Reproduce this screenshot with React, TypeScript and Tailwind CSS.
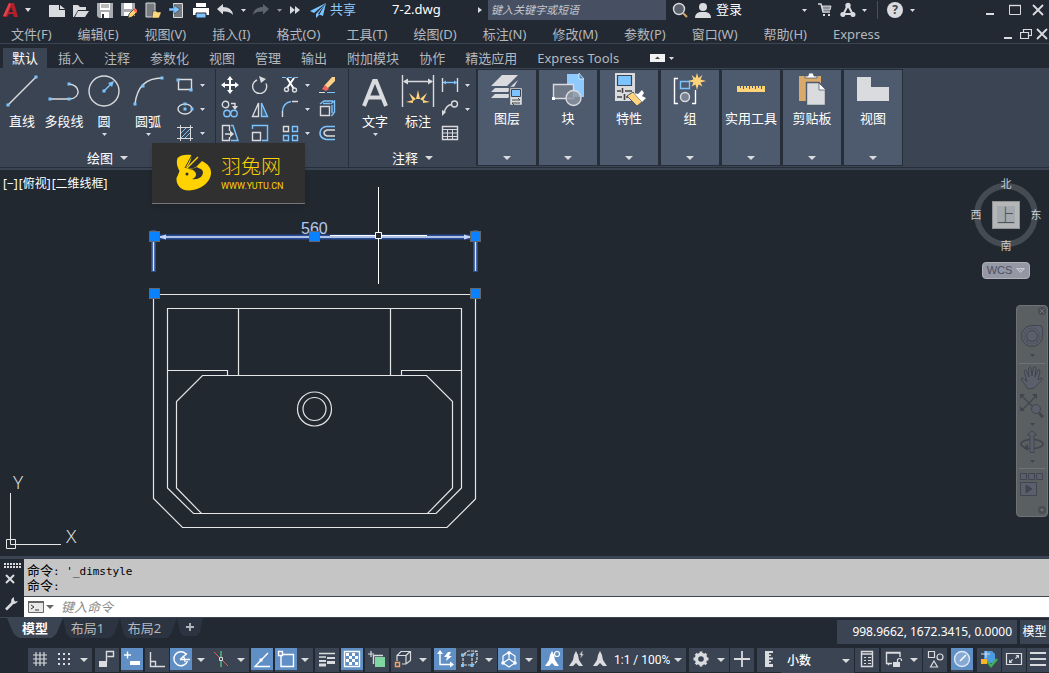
import React from "react";

type Kids = { children?: React.ReactNode };

const L = "#d9dbde";
const B = "#7cc4ff";

function Svg({ w = 24, h = 24, children, className = "" }: Kids & { w?: number; h?: number; className?: string }) {
  return (
    <svg width={w} height={h} viewBox={`0 0 ${w} ${h}`} fill="none" stroke={L} strokeWidth={1.4} className={`shrink-0 ${className}`} aria-hidden="true">
      {children}
    </svg>
  );
}

function Caret({ big = false }: { big?: boolean }) {
  return big ? (
    <svg width="8" height="4" viewBox="0 0 8 4" className="shrink-0" aria-hidden="true"><path d="M0 0h8L4 4z" fill={L} /></svg>
  ) : (
    <svg width="5" height="3" viewBox="0 0 5 3" className="shrink-0" aria-hidden="true"><path d="M0 0h5L2.500 3z" fill={L} /></svg>
  );
}

function IconButton({ label, w, children }: Kids & { label: string; w: string }) {
  return (
    <button type="button" aria-label={label} className={`flex shrink-0 items-center justify-center ${w}`}>
      {children}
    </button>
  );
}

/* ---------- Title bar ---------- */

function TitleBar() {
  return (
    <header className="flex h-5 shrink-0 items-center text-[13px] text-white">
      <IconButton label="应用程序菜单" w="w-[22px]">
        <Svg w={16} h={18}>
          <path d="M6 2h5l4 14h-4l-1-3H6l-2 3H0z" fill="#b3202c" stroke="none" />
          <path d="M6 2l2 1-5 12H0z" fill="#e0444c" stroke="none" />
          <path d="M8 6l2 5H6z" fill="#222933" stroke="none" />
        </Svg>
      </IconButton>
      <IconButton label="展开" w="w-[12px]"><Svg w={6} h={4}><path d="M0 0h6L3 4z" fill={L} stroke="none" /></Svg></IconButton>
      <div className="flex pl-[11px]">
        <IconButton label="新建" w="w-6">
          <Svg w={16} h={18}><path d="M0 4h10v5h6v7H0z" fill={L} stroke="none" /><path d="M11 4l5 4h-5z" fill={L} stroke="none" /></Svg>
        </IconButton>
        <IconButton label="打开" w="w-6">
          <Svg w={18} h={18}><path d="M1 16V4h5l2 2h6v3H6L2 16z" fill={L} stroke="none" /><path d="M6 10h11l-4 6H3z" fill={L} stroke="none" /></Svg>
        </IconButton>
        <IconButton label="保存" w="w-6">
          <Svg w={16} h={18}><path d="M0 2h16v15H2l-2-2z" fill="#a9adb3" stroke="none" /><path d="M3 2h10v7H3zM4 11h8v6H4z" fill="#fff" stroke="none" /><path d="M4 4h8M4 6h8" stroke="#777" strokeWidth={1} /><path d="M5 13h2v4H5z" fill="#333" stroke="none" /></Svg>
        </IconButton>
        <IconButton label="另存为" w="w-6">
          <Svg w={16} h={18}><path d="M0 2h14v13H0z" fill="#a9adb3" stroke="none" /><path d="M3 2h8v6H3zM3 11h7v4H3z" fill="#fff" stroke="none" /><path d="M8 13l5-5 3 3-5 5-4 1z" fill="#ffcf70" stroke="#222933" strokeWidth={0.7} /><path d="M12 9l2-2 3 3-2 2z" fill="#f4715c" stroke="none" /></Svg>
        </IconButton>
        <IconButton label="从移动设备打开" w="w-6">
          <Svg w={16} h={18}><path d="M1 2h9v14H1z" fill="#777b80" stroke={L} strokeWidth={1} /><path d="M8 10h3l1 1h4v1l-2 5H7z" fill="#ffd77d" stroke="#222933" strokeWidth={0.5} /></Svg>
        </IconButton>
        <IconButton label="保存到移动设备" w="w-6">
          <Svg w={16} h={18}><path d="M4.500 2.500h9v14h-9z" fill="#777b80" stroke={L} strokeWidth={1} /><path d="M0 7h5V4l6 4.500L5 13v-3H0z" fill={B} stroke="#222933" strokeWidth={0.5} /></Svg>
        </IconButton>
        <IconButton label="打印" w="w-6">
          <Svg w={16} h={18}><path d="M3 2h10v4H3zM0 7h16v7H0z" fill="#fff" stroke="none" /><path d="M3 12h10v5H3z" fill={B} stroke="#222933" strokeWidth={1} /></Svg>
        </IconButton>
        <IconButton label="放弃" w="w-6">
          <Svg w={16} h={12}><path d="M0 5l6-5v3q9 0 10 8-3-4-10-3.500v3z" fill={L} stroke="none" /></Svg>
        </IconButton>
        <IconButton label="放弃列表" w="w-3"><Caret /></IconButton>
        <IconButton label="重做" w="w-6">
          <Svg w={16} h={12}><path d="M16 5l-6-5v3Q1 3 0 11q3-4 10-3.500v3z" fill="#5d646d" stroke="none" /></Svg>
        </IconButton>
        <IconButton label="重做列表" w="w-3"><span className="opacity-60"><Caret /></span></IconButton>
        <IconButton label="更多" w="w-5">
          <Svg w={10} h={8}><path d="M0 0l5 4-5 4zM5 0l5 4-5 4z" fill={L} stroke="none" /></Svg>
        </IconButton>
      </div>
      <button type="button" className="ml-[5px] flex shrink-0 items-center gap-1 text-[#8fcaff]">
        <Svg w={16} h={16}><path d="M16 1L0 9l4 2zM16 1L6 12v4l3-3zM16 1l-3 13-5-2z" fill={B} stroke="none" /></Svg>
        共享
      </button>
      <h1 className="ml-9 w-[84px] shrink-0 text-[13px] font-normal">7-2.dwg</h1>
      <IconButton label="收拢" w="w-2"><Svg w={4} h={6}><path d="M0 0l4 3-4 3z" fill={L} stroke="none" /></Svg></IconButton>
      <input aria-label="搜索" placeholder="键入关键字或短语" className="ml-1 h-5 w-[178px] min-w-0 bg-[#475063] px-[3px] pb-0.5 text-[11px] italic outline-none placeholder:text-[#c3c7ce]" />
      <IconButton label="查找" w="w-[27px]">
        <Svg w={16} h={16}><circle cx="7" cy="7" r="5.500" fill="#59616c" /><path d="M11 11l4 4" stroke="#d8a768" strokeWidth={2} /></Svg>
      </IconButton>
      <button type="button" className="flex shrink-0 items-center gap-1 pl-px">
        <Svg w={18} h={16}><circle cx="9" cy="5" r="4" fill={L} stroke="none" /><path d="M1 16q0-5 5-6h6q5 1 5 6z" fill={L} stroke="none" /></Svg>
        登录
      </button>
      <div className="ml-auto flex shrink-0 items-center">
        <IconButton label="登录菜单" w="w-3"><Caret /></IconButton>
        <IconButton label="应用商店" w="w-[30px]">
          <Svg w={14} h={14}><path d="M0 1h3l2 8h7" /><path d="M4 3h9l-1 4H5z" fill="#8d929a" strokeWidth={1} /><path d="M5 11h2v2H5zM10 11h2v2h-2z" fill={L} stroke="none" /></Svg>
        </IconButton>
        <IconButton label="保持联系" w="w-4">
          <Svg w={16} h={16}><path d="M8 3L3 13M8 3l5 10M3 12h10" strokeWidth={2} /><circle cx="8" cy="3.500" r="2" fill={L} /><circle cx="2.800" cy="12.500" r="1.800" fill={L} /><circle cx="13" cy="12.500" r="1.800" fill={L} /></Svg>
        </IconButton>
        <IconButton label="联系菜单" w="w-4"><Caret /></IconButton>
        <div className="mx-[5px] h-[18px] w-px bg-[#475063]" />
        <button type="button" aria-label="帮助" className="ml-1 flex size-4 shrink-0 items-center justify-center rounded-full bg-[#d9dbde] text-[12px] font-bold text-[#3b4453]">?</button>
        <IconButton label="帮助菜单" w="w-[18px]"><Caret /></IconButton>
      </div>
      <div className="ml-14 flex shrink-0 items-center">
        <IconButton label="最小化" w="w-[26px]"><Svg w={12} h={12}><path d="M2 10h8" strokeWidth={2} /></Svg></IconButton>
        <IconButton label="最大化" w="w-6"><Svg w={12} h={12}><path d="M.5 1.500h11v9H.5z" strokeWidth={1} /><path d="M0 1.500h12" /></Svg></IconButton>
        <IconButton label="关闭" w="w-[22px]"><Svg w={12} h={12}><path d="M1 1l10 10M11 1L1 11" strokeWidth={1.800} /></Svg></IconButton>
      </div>
    </header>
  );
}

/* ---------- Menu bar and ribbon tabs ---------- */

const MENUS = ["文件(F)", "编辑(E)", "视图(V)", "插入(I)", "格式(O)", "工具(T)", "绘图(D)", "标注(N)", "修改(M)", "参数(P)", "窗口(W)", "帮助(H)", "Express"];

function MenuBar() {
  return (
    <nav className="flex h-6 shrink-0 items-center border-b border-[#3b4453] pt-1 pl-[11px] text-[13px] leading-5 text-[#b4b8be]">
      <div className="flex gap-[26px]">
        {MENUS.map((m) => (
          <button type="button" key={m} className="whitespace-nowrap">{m}</button>
        ))}
      </div>
      <div className="ml-auto flex text-white">
        <IconButton label="最小化图形" w="w-[18px]"><Svg w={10} h={12}><path d="M1 10h8" strokeWidth={2} /></Svg></IconButton>
        <IconButton label="还原图形" w="w-[18px]"><Svg w={12} h={12}><path d="M3.500 4V1.500h8v6H9M.5 4.500h8v6h-8z" strokeWidth={1.200} /></Svg></IconButton>
        <IconButton label="关闭图形" w="w-[14px]"><Svg w={12} h={12}><path d="M1 1l10 10M11 1L1 11" strokeWidth={1.800} /></Svg></IconButton>
      </div>
    </nav>
  );
}

const TABS = ["默认", "插入", "注释", "参数化", "视图", "管理", "输出", "附加模块", "协作", "精选应用", "Express Tools"];

function RibbonTabs() {
  return (
    <nav className="flex h-[25px] shrink-0 items-end gap-0.5 border-b border-[#3b4453] pl-[3px] text-[13px]">
      {TABS.map((t, i) => (
        <button type="button" key={t} className={`h-5 px-[9px] leading-5 whitespace-nowrap ${i === 0 ? "bg-[#3b4453] text-white" : "text-[#b4b8be]"}`}>{t}</button>
      ))}
      <button type="button" aria-label="最小化功能区" className="ml-5 flex h-5 items-center gap-1">
        <svg width="15" height="8" viewBox="0 0 15 8" aria-hidden="true"><path d="M0 0h15v8H0z" fill="#f2f2f2" /><path d="M5 5h5L7.500 2.500z" fill="#444" /></svg>
        <Caret />
      </button>
    </nav>
  );
}

/* ---------- Ribbon ---------- */

function Big({ label, w, caret = false, children }: Kids & { label: string; w: string; caret?: boolean }) {
  return (
    <button type="button" className={`flex shrink-0 flex-col items-center ${w}`}>
      <span className="flex h-9 items-center justify-center">{children}</span>
      <span className="mt-0.5 h-5 leading-5 whitespace-nowrap">{label}</span>
      <span className="mt-0.5 flex h-1">{caret && <Caret />}</span>
    </button>
  );
}

function Small({ label, caret = false, children }: Kids & { label: string; caret?: boolean }) {
  return (
    <div className="flex h-6 items-center">
      <IconButton label={label} w="w-[26px]"><Svg w={18} h={18}>{children}</Svg></IconButton>
      <span className="flex w-2 justify-center">{caret && <Caret />}</span>
    </div>
  );
}

function PanelTitle({ children }: Kids) {
  return (
    <button type="button" className="mx-auto mt-auto flex h-[18px] items-center gap-[7px] leading-[18px]">
      {children}
      <Caret big />
    </button>
  );
}

const dot = (x: number, y: number) => <rect x={x - 1.5} y={y - 1.5} width="3" height="3" fill={B} stroke="none" />;

function DrawPanel() {
  return (
    <section className="flex w-[216px] shrink-0 flex-col border-r border-[#262e3a] pt-1">
      <div className="flex">
        <Big label="直线" w="w-[44px]"><Svg w={34} h={34}><path d="M3 31L31 3" />{dot(3, 31)}{dot(31, 3)}</Svg></Big>
        <Big label="多段线" w="w-[40px]"><Svg w={34} h={34}><path d="M2 25h21M22 10c12 1 12 14 1 15" />{dot(3, 25)}{dot(22, 10)}{dot(22, 25)}</Svg></Big>
        <Big label="圆" w="w-[40px]" caret><Svg w={34} h={34}><circle cx="17" cy="17" r="15" /><path d="M17 17l8-8" stroke={B} /><path d="M27 7l-6 2 4 4z" fill={B} stroke="none" />{dot(17, 17)}</Svg></Big>
        <Big label="圆弧" w="w-[48px]" caret><Svg w={34} h={34}><path d="M4 30Q7 4 31 4" />{dot(4, 30)}{dot(12, 12)}{dot(31, 4)}</Svg></Big>
        <div>
          <Small label="矩形" caret><path d="M2.500 3.500h13v10h-13z" />{dot(2, 4)}{dot(15, 14)}</Small>
          <Small label="椭圆" caret><ellipse cx="9" cy="9" rx="7" ry="5" />{dot(9, 4)}{dot(9, 9)}{dot(16, 9)}</Small>
          <Small label="图案填充" caret><path d="M4.500 1v16M14.500 1v16M1 3.500h16M1 14.500h16" strokeWidth={1} /><path d="M5 9l5-5M5 14L14 5M9 14l5-5" stroke={B} strokeWidth={1} /></Small>
        </div>
      </div>
      <PanelTitle>绘图</PanelTitle>
    </section>
  );
}

function ModifyPanel() {
  return (
    <section className="flex w-[133px] shrink-0 border-r border-[#262e3a] pt-1 pl-px">
      <div className="w-[30px]">
        <Small label="移动"><path d="M9 2v14M2 9h14" stroke="#fff" strokeWidth={2} /><path d="M9 0l3 4H6zM9 18l3-4H6zM0 9l4-3v6zM18 9l-4-3v6z" fill="#fff" stroke="none" /></Small>
        <Small label="复制"><circle cx="4.500" cy="4.500" r="3.200" /><path d="M10 3.500h4v3" /><path d="M11 6h6l-3 4z" fill={L} stroke="none" /><circle cx="6" cy="13.500" r="3.200" stroke={B} /><circle cx="13" cy="13.500" r="3.200" stroke={B} /></Small>
        <Small label="拉伸"><path d="M8.500 7V1.500h-7v15h7V13M4 10h6" /><path d="M9 6.500l4 3.500-4 3.500z" fill={L} stroke="none" /><path d="M10 1.500h2l5 15h-7" stroke={B} /></Small>
      </div>
      <div className="w-[30px]">
        <Small label="旋转"><path d="M6 4A7 7 0 1 0 15 7.500" /><path d="M8 0l7 3-5 4z" fill={L} stroke="none" /></Small>
        <Small label="镜像"><path d="M7.500 3v13.500h-6z" /><path d="M10.500 3v13.500h6z" stroke={B} fill="#45637f" /></Small>
        <Small label="缩放"><path d="M1.500 5V1.500h15v15H11" stroke={B} /><path d="M1.500 8.500h8v8h-8z" /></Small>
      </div>
      <div className="w-[40px]">
        <Small label="修剪" caret><path d="M1 1.500h16" stroke={B} strokeWidth={1} strokeDasharray="4 2" /><path d="M6 2l7 11M13 2L6 12" stroke="#fff" strokeWidth={2} /><circle cx="5.500" cy="13.500" r="2" /><circle cx="13.500" cy="14" r="2" /></Small>
        <Small label="圆角" caret><path d="M1.500 11Q2 3 10 1.500" stroke={B} /><path d="M11 1.500h6M1.500 11v6" /></Small>
        <Small label="阵列" caret><path d="M2.500 2.500h5v5h-5z" /><path d="M11.500 2.500h5v5h-5zM2.500 11.500h5v5h-5zM11.500 11.500h5v5h-5z" stroke={B} /></Small>
      </div>
      <div>
        <Small label="删除"><path d="M6 10l8-9h3v4l-8 8z" fill="#ffd08a" stroke="none" /><path d="M4 13l3-4 4 4-3 2z" fill="#f2655c" stroke="none" /><path d="M1 16.500h6" strokeWidth={1} /><path d="M9 16.500h8" stroke={B} strokeWidth={1} /></Small>
        <Small label="分解"><path d="M2.500 6.500h9v9h-9z" /><path d="M2 4l4-3h9M5 3.500h7M12.500 4l4-3v11l-3 4M14 5v8" stroke={B} /></Small>
        <Small label="偏移"><path d="M17 2.500H8Q2 4 2 9t6 6.500h9" stroke={B} strokeWidth={1.600} /><path d="M17 6H9Q6 7 6 9t3 3h8" /></Small>
      </div>
    </section>
  );
}

function AnnotatePanel() {
  return (
    <section className="flex w-[127px] shrink-0 flex-col pt-1">
      <div className="flex">
        <Big label="文字" w="w-[52px]" caret><Svg w={32} h={36}><path d="M5 33L15 8h2l10 25M9 24.500h14" strokeWidth={4} /></Svg></Big>
        <Big label="标注" w="w-[34px]">
          <Svg w={34} h={36}><path d="M1.500 2v32M32.500 2v32M3 8.500h28" /><path d="M2 8.500l5-3v6zM32 8.500l-5-3v6z" fill={L} stroke="none" /><path d="M17 17l-2 9h4zM8 20l7 6-3 2zM26 20l-7 6 3 2zM5 29l7-2v3zM29 29l-7-2v3z" fill="#ffd37a" stroke="none" /></Svg>
        </Big>
        <div className="pl-0.5">
          <Small label="线性标注" caret><path d="M1.500 2v14M16.500 2v14" /><path d="M2 6.500h14" stroke={B} /><path d="M2 6.500l3-2v4zM16 6.500l-3-2v4z" fill={B} stroke="none" /></Small>
          <Small label="引线" caret><circle cx="13.500" cy="4" r="3" /><path d="M10.500 4.500Q5 5 3 13" /><path d="M1 16V10l4 2z" fill={L} stroke="none" /></Small>
          <Small label="表格"><path d="M1.500 2.500h15v13h-15z" /><path d="M1.500 5.500h15M1.500 9h15M1.500 12.500h15M6.500 6v10M11.500 6v10" strokeWidth={1} /></Small>
        </div>
      </div>
      <PanelTitle>注释</PanelTitle>
    </section>
  );
}

const TILES: { label: string; icon: React.ReactNode }[] = [
  {
    label: "图层",
    icon: <Svg w={36} h={36}><path d="M2 14L13 3h16L18 14zM2 20l4-4h14l9-8-4 7-6 5zM2 26l4-4h14l9-7-4 7-6 4z" fill={L} stroke="none" /><path d="M20.500 15.500h13v18h-13z" fill={L} stroke="#4e5a6e" /><path d="M22.500 17.500h9v7h-9z" fill={B} stroke="#3b4453" strokeWidth={1} /><path d="M23 28h8l-2-2M31 31h-8l2 2" stroke="#444" strokeWidth={1} /></Svg>,
  },
  {
    label: "块",
    icon: <Svg w={36} h={36}><path d="M17 2h12l5 5v18H17z" fill="#8fcaff" stroke="none" /><path d="M29 1l5 6h-5z" fill="#4e8fc2" stroke="#fff" strokeWidth={0.600} /><path d="M3.500 12.500h20v14h-20z" fill="#6f7988" /><circle cx="23.500" cy="26" r="7.500" fill="#8d96a3" fillOpacity={0.800} /><path d="M2 25h3v3H2z" fill="#fff" stroke="none" /></Svg>,
  },
  {
    label: "特性",
    icon: <Svg w={36} h={36}><path d="M4 1h20v28H4z" fill={L} stroke="none" /><path d="M6.500 3.500h14v10h-14z" fill={B} stroke="#3b4453" strokeWidth={1.200} /><path d="M6 19h4M14 19h7M6 25h5M15 25h5" stroke="#444" /><path d="M11.500 16v5M13.500 22v6" stroke="#444" strokeWidth={1.600} /><path d="M16 24l6-4 9 10-5 4z" fill="#ffd37a" stroke="#4e5a6e" strokeWidth={1} /><path d="M23 21l4 1 4-4 2 3-2 3 4 2-4 4z" fill="#fff" stroke="none" /></Svg>,
  },
  {
    label: "组",
    icon: <Svg w={36} h={36}><path d="M6 6.500H2.500v25H6M20 31.500h3.500V18" stroke="#fff" /><path d="M8.500 9.500h9v7h-9z" stroke={B} /><circle cx="13" cy="25" r="4.500" fill="#7a8391" /><path d="M25 1l1.500 5 4-3-2 4.500L34 9l-5.500 1.500 2 4-4-2L25 18l-1.500-5.500-4 2 2-4L16 9l5.500-1.500-2-4.500 4 3z" fill="#ffd37a" stroke="none" /></Svg>,
  },
  {
    label: "实用工具",
    icon: <Svg w={36} h={36}><path d="M4 14h28v6H4z" fill="#ffd37a" stroke="none" /><path d="M7.500 14v2M10.500 14v3M13.500 14v2M16.500 14v3M19.500 14v2M22.500 14v3M25.500 14v2M28.500 14v3" stroke="#4e5a6e" strokeWidth={1} /></Svg>,
  },
  {
    label: "剪贴板",
    icon: <Svg w={36} h={36}><path d="M5 4h22v25H5z" fill="#d9aa6c" stroke="none" /><path d="M11 6V4h3l1-3h4l1 3h3v2z" fill="#fff" stroke="#4e5a6e" strokeWidth={0.800} /><path d="M12.500 10.500H25l6.500 7v16h-19z" fill={L} stroke="#4e5a6e" /><path d="M25 11v7h7z" fill="#fff" stroke="#4e5a6e" strokeWidth={0.800} /></Svg>,
  },
  { label: "视图", icon: <Svg w={36} h={36}><path d="M2 5h14v10h18v14H2z" fill={L} stroke="none" /></Svg> },
];

function Ribbon() {
  return (
    <div className="relative shrink-0 border-b-2 border-[#3b4453] text-[13px] text-white">
      <div className="flex h-[99px] border-b border-[#262e3a] bg-[#3b4453]">
        <DrawPanel />
        <ModifyPanel />
        <AnnotatePanel />
        <div className="mb-px flex shrink-0 gap-[3px] bg-[#262e3a] pt-px pr-px pb-px pl-0.5">
          {TILES.map((t) => (
            <button type="button" key={t.label} className="flex w-[58px] flex-col items-center bg-[#4e5a6e] pt-0.5">
              {t.icon}
              <span className="h-5 leading-5 whitespace-nowrap">{t.label}</span>
              <span className="mt-auto flex pb-[5px]"><Caret big /></span>
            </button>
          ))}
        </div>
      </div>
      <div className="absolute top-[74px] left-[152px] z-10 flex h-[61px] w-[153px] items-center gap-[9px] border-b border-[#777] bg-[#303030] pl-6 text-[#ffd200] shadow-md">
        <svg width="36" height="38" viewBox="0 0 36 38" aria-hidden="true">
          <path d="M1.500 4C4 1 10 0 15.500 1c0 5-2 9-5.500 13 3 0 7 1 10-1l6-6c6 3 9.500 7 9 13-1 9-11 16-22 16.500C4 36.500 0 30 .5 24c1-2 2-4 3-7C1 13 0 8 1.500 4z" fill="#ffd200" />
          <path d="M10 15c4-1 8 0 11-2 2 2 5 1 6 5 0 5-5 8-11 7 4-1 5-5 3-7-2-3-5-3-9-3z" fill="#303030" />
          <path d="M22 3L11 14" stroke="#ffd200" strokeWidth="1.500" />
          <path d="M16 1L9 14" stroke="#303030" strokeWidth="1" />
          <circle cx="11" cy="20" r="1.500" fill="#303030" />
        </svg>
        <div className="flex flex-col">
          <span className="text-[20px] leading-[26px] font-light">羽兔网</span>
          <span className="font-['Roboto',sans-serif] text-[9px] leading-3">WWW.YUTU.CN</span>
        </div>
      </div>
    </div>
  );
}

/* ---------- Drawing area ---------- */

function Grip({ x, y }: { x: number; y: number }) {
  return <rect x={x - 5} y={y - 5} width="10" height="10" fill="#0a82ff" stroke="#62676e" strokeWidth="1" />;
}

function Sink() {
  return (
    <svg className="absolute inset-0 h-full w-full" fill="none" aria-label="洗脸盆平面图" role="img">
      <g stroke="#e4e6e8" strokeWidth="1.2">
        <path d="M153.500 124.500H475.500V329l-28.500 28.500H182.500L153.500 328.500z" />
        <path d="M167.500 138.500H461.500V318L436 343.500H193.500L167.500 318z" />
        <path d="M202.500 205.500h224l26 26V318L427.500 343.500h-226L176.500 318V231.500z" />
        <path d="M238.500 138.500v67M390.500 138.500v67M167.500 200.500h60v5M461.500 200.500h-60v5" />
        <circle cx="314.500" cy="239" r="17" />
        <circle cx="314.500" cy="239" r="11.500" />
      </g>
      <g stroke="#2a56b0" strokeWidth="5" strokeOpacity="0.800">
        <path d="M154 67H476M153.500 60v42M475.500 60v42" />
      </g>
      <g stroke="#dbe6ff" strokeWidth="1.4">
        <path d="M160 67H470M153.500 67v34M475.500 67v34" />
        <path d="M158 67l8-2.500v5zM472 67l-8-2.500v5z" fill="#c5d5fa" stroke="none" />
      </g>
      <text x="301" y="64" fill="#b6c8ee" fontSize="16" fontFamily="Liberation Sans, sans-serif">560</text>
      <Grip x={154.500} y={66.500} />
      <Grip x={314.500} y={66.500} />
      <Grip x={475.500} y={66.500} />
      <Grip x={154.500} y={123.500} />
      <Grip x={475.500} y={123.500} />
      <g stroke="#fff">
        <path d="M378.500 17v45M378.500 69v45M330 65.500h45M382 65.500h45" />
        <path d="M375.500 62.500h6v6h-6z" fill="#212830" />
      </g>
    </svg>
  );
}

function UcsIcon() {
  return (
    <svg width="90" height="94" viewBox="0 0 90 94" className="absolute bottom-0 left-0" aria-label="UCS" fill="none" stroke="#e4e6e8">
      <path d="M10.500 31v51.500H61M6.500 77.500h9v9h-9z" />
      <g fill="#d9dbde" stroke="none" fontSize="19" fontWeight="300" fontFamily="Noto Sans, sans-serif">
        <text x="13" y="27">Y</text>
        <text x="66" y="81">X</text>
      </g>
    </svg>
  );
}

function Compass() {
  return (
    <div className="absolute top-2 right-[7px] flex w-[72px] flex-col items-center text-[11px] text-[#c9ccd0]">
      <div className="grid h-[74px] w-full grid-cols-[12px_1fr_12px] grid-rows-[12px_1fr_12px] place-items-center leading-3">
        <svg width="66" height="66" viewBox="0 0 66 66" fill="none" className="col-span-3 col-start-1 row-span-3 row-start-1" aria-hidden="true"><circle cx="33" cy="33" r="29" stroke="#454b53" strokeWidth="6" /></svg>
        <span className="col-start-2 row-start-1">北</span>
        <span className="col-start-1 row-start-2">西</span>
        <button type="button" aria-label="上视图" className="col-start-2 row-start-2 flex size-7 items-center justify-center border border-[#8f9294] bg-[#b4b6b7] text-[#4d5359]">
          <span className="bg-[#a3a9ae] text-[18px] leading-[18px] font-light">上</span>
        </button>
        <span className="col-start-3 row-start-2">东</span>
        <span className="col-start-2 row-start-3">南</span>
      </div>
      <button type="button" className="mt-2.5 flex h-[17px] w-12 items-center justify-center gap-1 rounded border border-[#b0b1bb] bg-[#9597a5] font-['Liberation_Sans',sans-serif] text-[11px] text-[#4b5060]">
        WCS
        <svg width="9" height="5" viewBox="0 0 9 5" aria-hidden="true"><path d="M.5.5h8l-4 4z" fill="#a9abb6" stroke="#c6c7cf" /></svg>
      </button>
    </div>
  );
}

function NavBar() {
  const c = "#40454f";
  const f = "#5a606b";
  const small = <svg width="5" height="3" viewBox="0 0 5 3" aria-hidden="true"><path d="M0 0h5L2.500 3z" fill={c} /></svg>;
  return (
    <div className="absolute top-[135px] right-px flex h-[212px] w-8 flex-col items-center rounded border border-[#6d7276] bg-[#5a5f62]">
      <button type="button" aria-label="关闭导航栏" className="mr-px flex self-end pt-px"><svg width="8" height="8" viewBox="0 0 8 8" aria-hidden="true"><circle cx="4" cy="4" r="4" fill="#4a4f55" /><path d="M2 2l4 4M6 2L2 6" stroke="#6d7276" /></svg></button>
      <button type="button" aria-label="导航控制盘" className="mt-2.5 flex"><svg width="22" height="22" viewBox="0 0 22 22" fill={f} stroke={c} aria-hidden="true"><path d="M11 .5h7.500q3 0 3 3V11A10.500 10.500 0 1 1 11 .5z" /><circle cx="11" cy="11" r="8" strokeWidth="0.5" /><circle cx="11" cy="11" r="5.500" /><path d="M7 15l-2 2M15 15l2 2" /></svg></button>
      <span className="flex h-4 items-center">{small}</span>
      <span className="h-px w-[26px] bg-[#6d7276]" />
      <button type="button" aria-label="平移" className="mt-0.5 flex"><svg width="24" height="24" viewBox="0 0 24 24" fill={f} stroke={c} aria-hidden="true"><path d="M8 23L1 13q0-2 3 0l3 3L4 5q1-2 2.500 0L9 11 8.500 2q1-2 2.500 0l1 8 1.500-9q2-1 2.500 1l-1 9 3-7q2-1 2 1l-2 9 3-2q2 0 1 2l-5 5-3 3z" /></svg></button>
      <button type="button" aria-label="范围缩放" className="mt-1 flex"><svg width="24" height="24" viewBox="0 0 24 24" fill="none" stroke={c} aria-hidden="true"><path d="M2 2l14 14M16 2L2 16" strokeWidth="1.200" /><path d="M0 0h5L0 5zM17 0v5l-5-5zM0 17v-5l5 5z" fill={c} stroke="none" /><circle cx="16" cy="15" r="4.500" fill={f} /><path d="M19 19l4 4" strokeWidth="3" /></svg></button>
      <span className="flex h-3 items-center">{small}</span>
      <button type="button" aria-label="动态观察" className="flex"><svg width="24" height="24" viewBox="0 0 24 24" fill={f} stroke={c} aria-hidden="true"><ellipse cx="12" cy="14" rx="11" ry="4.500" fill="none" strokeWidth="1.500" /><path d="M10 22.500V5H7.500L12 .5 16.500 5H14v17.500z" /><path d="M8 14v7l-5-3z" fill={c} stroke="none" /></svg></button>
      <span className="flex h-[14px] items-center">{small}</span>
      <span className="h-px w-[26px] bg-[#6d7276]" />
      <button type="button" aria-label="ShowMotion" className="mt-1 flex"><svg width="24" height="24" viewBox="0 0 24 24" fill={f} stroke={c} aria-hidden="true"><path d="M.5.5h6v6h-6zM8.500.5h6v6h-6zM16.500.5h6v6h-6zM.5 9.500h16v13H.5z" /><path d="M6 12l6 4-6 4z" fill={c} /></svg></button>
      <button type="button" aria-label="自定义导航栏" className="mt-auto mr-px flex self-end pb-0.5"><svg width="8" height="8" viewBox="0 0 8 8" aria-hidden="true"><circle cx="4" cy="4" r="4" fill="#4a4f55" /><path d="M2 3h4L4 6z" fill="#6d7276" /></svg></button>
    </div>
  );
}

function Viewport() {
  return (
    <main className="relative min-h-0 flex-1 overflow-hidden bg-[#212830]">
      <div className="flex gap-px px-[3px] pt-1 text-[12px] leading-5 text-white">
        <button type="button">[−]</button>
        <button type="button">[俯视]</button>
        <button type="button">[二维线框]</button>
      </div>
      <Sink />
      <UcsIcon />
      <Compass />
      <NavBar />
    </main>
  );
}

/* ---------- Command line ---------- */

function CommandLine() {
  return (
    <section className="flex shrink-0 border-t-[3px] border-[#3b4453] bg-[#222933]">
      <div className="flex w-6 shrink-0 flex-col items-center pt-1 pb-1.5">
        <svg width="17" height="5" viewBox="0 0 17 5" aria-hidden="true"><path d="M0 1h17M0 4h17" stroke="#d9dbde" strokeWidth="2" strokeDasharray="2 1" /></svg>
        <button type="button" aria-label="关闭命令行" className="mt-1.5 mr-1 flex"><Svg w={10} h={10}><path d="M1 1l8 8M9 1L1 9" strokeWidth={2} /></Svg></button>
        <button type="button" aria-label="自定义命令行" className="mt-auto mr-0.5 flex"><Svg w={14} h={14}><path d="M2 12.500L9 5.500" strokeWidth={2.600} /><path d="M10 0Q6 2 7.500 6q4 2.500 6.500-2l-3 .5L10 3z" fill={L} stroke="none" /></Svg></button>
      </div>
      <div className="min-w-0 flex-1">
        <div className="h-[38px] border-b border-[#3f454d] bg-[#c5c5c5] px-[3px] pt-1 font-['DejaVu_Sans_Mono','Noto_Sans_CJK_SC',monospace] text-[11px] leading-[15px] text-black">
          <p className="h-[15px] whitespace-pre"><span className="text-[13px]">命令</span>: '_dimstyle</p>
          <p className="h-[15px] whitespace-pre"><span className="text-[13px]">命令</span>:</p>
        </div>
        <div className="flex h-5 items-center bg-white pl-1">
          <button type="button" aria-label="近期使用的命令" className="flex shrink-0 items-center gap-0.5">
            <svg width="16" height="12" viewBox="0 0 16 12" fill="none" aria-hidden="true"><path d="M.5.5h15v11H.5z" fill="#e8e8e8" stroke="#666" /><path d="M0 1h16" stroke="#666" strokeWidth="2" /><path d="M3 4l3 2-3 2M7 9h4" stroke="#333" /></svg>
            <svg width="8" height="4" viewBox="0 0 8 4" aria-hidden="true"><path d="M0 0h8L4 4z" fill="#666" /></svg>
          </button>
          <input aria-label="命令" placeholder="键入命令" className="h-5 min-w-0 flex-1 pl-[7px] text-[13px] text-black italic outline-none placeholder:text-[#8a8a8a]" />
        </div>
      </div>
    </section>
  );
}

/* ---------- Layout tabs and status bar ---------- */

function LayoutTabs() {
  return (
    <div className="flex h-[31px] shrink-0 border-t border-[#3b4453] text-[13px]">
      <div className="flex h-5 leading-5 text-[#b4b8be]">
        <button type="button" className="ml-[7px] w-14 bg-[#3b4453] font-bold text-white [clip-path:polygon(0_0,100%_0,88%_80%,80%_100%,22%_100%,12%_80%)]">模型</button>
        <button type="button" className="w-[57px] bg-[#2c3441] pr-2 [clip-path:polygon(0_0,100%_0,90%_80%,82%_100%,14%_100%,6%_80%)]">布局1</button>
        <button type="button" className="w-[57px] bg-[#2c3441] pr-2 [clip-path:polygon(0_0,100%_0,90%_80%,82%_100%,14%_100%,6%_80%)]">布局2</button>
        <button type="button" aria-label="新建布局" className="flex h-[18px] w-[26px] items-center justify-center bg-[#2c3441] [clip-path:polygon(0_0,100%_0,88%_80%,75%_100%,25%_100%,12%_80%)]"><Svg w={10} h={10}><path d="M5 1v8M1 5h8" stroke="#b4b8be" strokeWidth={1.800} /></Svg></button>
      </div>
      <div className="mt-0.5 ml-auto flex h-6 gap-[3px] text-[12px] leading-6 text-white">
        <button type="button" className="w-[180px] bg-[#3b4453] pr-[5px] text-right whitespace-nowrap">998.9662, 1672.3415, 0.0000</button>
        <button type="button" className="w-[29px] bg-[#3b4453] whitespace-nowrap">模型</button>
      </div>
    </div>
  );
}

function Cell({ label, w = "w-6", on = false, children }: Kids & { label: string; w?: string; on?: boolean }) {
  return (
    <button type="button" aria-label={label} aria-pressed={on} className={`flex h-6 shrink-0 items-center justify-center border-b-2 border-[#3b4453] ${w} ${on ? "bg-[#5f8fc4]" : "bg-[#3b4453]"}`}>
      <Svg w={18} h={18}>{children}</Svg>
    </button>
  );
}

function Drop({ label, w = "w-4" }: { label: string; w?: string }) {
  return (
    <button type="button" aria-label={label} className={`flex h-6 shrink-0 items-center justify-center bg-[#3b4453] ${w}`}>
      <Caret big />
    </button>
  );
}

function Group({ children, className = "" }: Kids & { className?: string }) {
  return <div className={`flex shrink-0 ${className}`}>{children}</div>;
}

const PERSON = "M9 1l2 4 1 5 4 6h-4l-3-3-3 3H2l4-6 1-5z";

function StatusBar() {
  return (
    <footer className="flex h-[25px] shrink-0 pl-7 text-[12px] text-white">
      <Group>
        <Cell label="栅格"><path d="M5 2v14M9 2v14M13 2v14M2 5h14M2 9h14M2 13h14" strokeWidth={1.200} /></Cell>
        <Cell label="捕捉模式"><path d="M3 4h12M3 9h12M3 14h12" strokeWidth={2} strokeDasharray="2 3" /></Cell>
        <Drop label="捕捉设置" />
      </Group>
      <Group className="ml-[3px] gap-0.5">
        <Cell label="推断约束"><path d="M1 11h8v6H1z" fill={L} stroke="none" /><path d="M8.500 12V1.500h7v5h-6" /></Cell>
        <Cell label="动态输入" on w="w-[22px]"><path d="M1 5h7M4.500 1.500v7" stroke="#fff" /><path d="M7 11h10v4H7z" fill="#fff" stroke="none" /></Cell>
        <Cell label="正交"><path d="M2.500 2v14.500H17M3 11.500h4.500v5" /></Cell>
      </Group>
      <Group className="ml-px">
        <Cell label="极轴追踪" on w="w-[22px]"><path d="M14 4A7 7 0 1 0 15.500 11M8 9.500h10M8 9.500l7-6" stroke="#fff" /><path d="M11 6q2 2 2 6" stroke="#fff" /></Cell>
        <Drop label="极轴设置" w="w-[17px]" />
        <Cell label="等轴测草图"><path d="M9 1v16" stroke="#5ed08a" strokeWidth={1.200} /><path d="M2 2l14 14" stroke="#e35d5d" strokeWidth={1} /><path d="M7.500 7.500h3v3h-3z" fill="#3b4453" strokeWidth={1} /></Cell>
        <Drop label="等轴测设置" />
      </Group>
      <Group className="ml-0.5 gap-0.5">
        <Cell label="对象捕捉追踪" on w="w-[22px]"><path d="M17 16.500H2L15 3" stroke="#fff" /><path d="M6.500 8.500h3v3h-3z" fill="#fff" stroke="none" /></Cell>
        <Group>
          <Cell label="对象捕捉" on w="w-[22px]"><path d="M4 4.500h12.500v12h-12.500z" stroke="#fff" /><path d="M1.500 1.500h4v4h-4z" fill="#5f8fc4" stroke="#fff" /></Cell>
          <Drop label="对象捕捉设置" />
        </Group>
        <Cell label="线宽"><path d="M1 3.500h16M1 7h7" strokeWidth={1.500} /><path d="M9 8h8M1 11h7" strokeWidth={2} /><path d="M1 15h7M9 12.500h8" strokeWidth={3} /></Cell>
        <Cell label="透明度" on w="w-[22px]"><path d="M1.500 1.500h15v15h-15z" stroke="#fff" /><path d="M3 4.500h12M3 10.500h12" stroke="#fff" strokeWidth={3} strokeDasharray="3 3" /><path d="M6 7.500h9M6 13.500h9" stroke="#fff" strokeWidth={3} strokeDasharray="3 3" /></Cell>
        <Cell label="选择循环"><path d="M0 4h6M3 1v6" strokeWidth={1.200} /><path d="M5.500 14V5.500H15" /><path d="M7 7h10v10H7z" fill="#7fd6a0" stroke="none" /></Cell>
        <Group>
          <Cell label="三维对象捕捉"><path d="M3 11V5.500L7 1.500h9.500v9L12 14H8M3 5.500h9V14M12 5.500l4-4" strokeWidth={1.200} /><path d="M1.500 12.500h4v4h-4z" stroke="#f5a469" fill="#3b4453" /></Cell>
          <Drop label="三维捕捉设置" />
        </Group>
      </Group>
      <Group className="ml-[3px]">
        <Cell label="动态 UCS" on w="w-[22px]"><path d="M4 3v11.500h11" stroke="#fff" /><path d="M4 0l3 4H1zM18 14.500l-4 3v-6zM12 2L8 7h3l-1 4 6-5h-3l2-4z" fill="#fff" stroke="none" /></Cell>
        <Cell label="选择过滤" w="w-[25px]"><path d="M3 5h9v10H3zM4 4l4-3h9v10l-4 4M12 5l4-4" strokeDasharray="3 1" strokeWidth={1.200} />{dot(2.500, 5)}{dot(12, 5)}{dot(2.500, 15.500)}{dot(12, 15.500)}</Cell>
        <Drop label="过滤设置" />
      </Group>
      <Group className="ml-px">
        <Cell label="小控件" on w="w-[22px]"><path d="M9 2l6 4v7l-6 4-6-4V6zM9 3v6M3 13l6-4 6 4" stroke="#fff" strokeWidth={1.200} /><circle cx="9" cy="3" r="1.800" fill="#fff" stroke="none" /><circle cx="3" cy="13" r="1.800" fill="#fff" stroke="none" /><circle cx="15" cy="13" r="1.800" fill="#fff" stroke="none" /></Cell>
        <Drop label="小控件设置" w="w-[17px]" />
      </Group>
      <Group className="ml-1">
        <Cell label="注释可见性" on w="w-[22px]"><path d={PERSON} fill="#fff" stroke="none" /><circle cx="14" cy="4" r="2.500" fill="#5f8fc4" stroke="#fff" strokeWidth={1.200} /></Cell>
        <Cell label="自动缩放" w="w-[25px]"><path d={PERSON} fill={L} stroke="none" /><path d="M15 1l-3 4h2l-1 4 4-5h-2l1-3z" fill={L} stroke="#3b4453" strokeWidth={0.500} /></Cell>
        <Cell label="注释比例"><path d={PERSON} fill={L} stroke="none" /></Cell>
        <button type="button" className="h-6 w-[58px] bg-[#3b4453] pl-0.5 font-['Roboto',sans-serif] leading-6 whitespace-nowrap">1:1 / 100%</button>
        <Drop label="比例列表" />
      </Group>
      <Group className="ml-[3px]">
        <Cell label="切换工作空间"><circle cx="9" cy="9" r="4.500" strokeWidth={3.400} /><path d="M9 1.500v3M9 13.500v3M1.500 9h3M13.500 9h3M3.700 3.700l2 2M12.300 12.300l2 2M14.300 3.700l-2 2M5.700 12.300l-2 2" strokeWidth={2.800} /></Cell>
        <Drop label="工作空间列表" />
      </Group>
      <Group className="ml-px"><Cell label="注释监视器"><path d="M9 1v16M1 9h16" strokeWidth={1.800} /></Cell></Group>
      <Group className="ml-auto">
        <Cell label="单位"><path d="M5 1h8v2h-4v1.500h2V6H9v1.500h4v2H9V11h2v1.500H9V14h4v3H5z" fill={L} stroke="none" /></Cell>
        <label className="relative flex w-[73px] items-center bg-[#3b4453]">
          <select aria-label="图形单位" className="h-6 w-full appearance-none bg-transparent pl-1.5 text-[12px] font-medium text-white">
            <option>小数</option>
            <option>建筑</option>
            <option>工程</option>
          </select>
          <span className="pointer-events-none absolute right-1"><Caret big /></span>
        </label>
      </Group>
      <Group className="ml-px"><Cell label="快捷特性"><path d="M3.500 1.500h11v15h-11zM4 4h10" /><path d="M6 7.500h2M10 7.500h3M6 10.500h2M10 10.500h3M6 13.500h2M10 13.500h3" strokeWidth={1.200} /></Cell></Group>
      <Group className="ml-0.5">
        <Cell label="锁定用户界面" w="w-[25px]"><path d="M15 7V2.500H1.500v11H7M1 3h14M5 13l-2 2" /><path d="M8 12h7v5H8z" fill={L} stroke="none" /><path d="M12.500 12V9.500q2-2 4 0V11" strokeWidth={1.200} /></Cell>
        <Drop label="锁定设置" />
      </Group>
      <Group className="ml-px"><Cell label="隔离对象"><path d="M2.500 1.500h6v6h-6zM8 11l3.500 6h-7z" strokeWidth={1.200} /><circle cx="14" cy="7" r="3" strokeWidth={1.200} /></Cell></Group>
      <Group className="ml-1"><Cell label="硬件加速" on w="w-[22px]"><circle cx="9" cy="9" r="7.500" stroke="#dce8f7" fill="#86aad3" /><path d="M7 11l6-6" stroke="#fff" /></Cell></Group>
      <Group className="ml-1"><Cell label="图形状态"><path d="M4 1h8l3 3v9H4z" fill="#4b9be0" stroke="none" /><path d="M1 4h9M6 1v7" strokeWidth={1.200} /><path d="M1 9h6v5H1z" fill="#fbb32a" stroke="none" /><path d="M8 12l3 4 6-7" stroke="#3fae5a" strokeWidth={2.400} /></Cell></Group>
      <Group className="ml-px"><Cell label="全屏显示"><path d="M1.500 3.500h15v11h-15zM5 12l2.500-2.500M13 6l-2.500 2.500" strokeWidth={1.200} /><path d="M4 9.500V13h3.500zM14 8.500V5h-3.500z" fill={L} stroke="none" /></Cell></Group>
      <Group className="ml-px"><Cell label="自定义" w="w-[22px]"><path d="M1 3h16M1 9h16M1 15h16" strokeWidth={2} /></Cell></Group>
    </footer>
  );
}

export default function App() {
  return (
    <div className="flex h-screen min-h-[560px] flex-col overflow-hidden bg-[#222933] font-['Noto_Sans','Noto_Sans_CJK_SC',sans-serif]">
      <TitleBar />
      <MenuBar />
      <RibbonTabs />
      <Ribbon />
      <Viewport />
      <CommandLine />
      <LayoutTabs />
      <StatusBar />
    </div>
  );
}
